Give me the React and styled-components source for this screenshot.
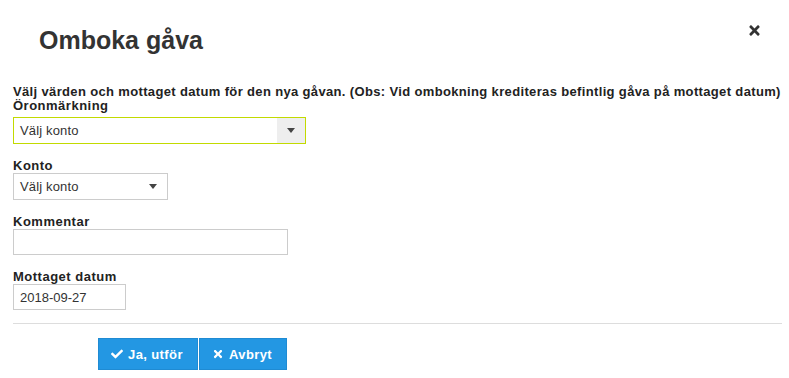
import React from "react"
import styled, { createGlobalStyle } from "styled-components"
import { FaCheck, FaTimes } from "react-icons/fa"

const GlobalStyle = createGlobalStyle`
  html, body {
    margin: 0;
    padding: 0;
    background: #fff;
  }
  body {
    font-family: "Liberation Sans", Arial, sans-serif;
    color: #333;
  }
  * {
    box-sizing: border-box;
  }
`

const Dialog = styled.div`
  width: 789px;
  height: 378px;
  background: #fff;
  overflow: hidden;
`

const Header = styled.header`
  display: flex;
  justify-content: space-between;
  align-items: flex-start;
  padding: 26px 27px 0 39px;
`

const Title = styled.h2`
  margin: 0;
  font-size: 25px;
  line-height: 29px;
  font-weight: bold;
  color: #333;
`

const CloseBtn = styled.button`
  display: flex;
  align-items: center;
  justify-content: center;
  margin-top: -3px;
  padding: 0;
  border: 0;
  background: none;
  color: #333;
  font-size: 15px;
  cursor: pointer;
`

const Body = styled.div`
  padding: 30px 7px 0 13px;
`

const Intro = styled.p`
  margin: 0;
  font-size: 13px;
  line-height: 14px;
  font-weight: bold;
  letter-spacing: 0.35px;
  color: #222;
  white-space: nowrap;
`

const Field = styled.div`
  display: flex;
  flex-direction: column;
  align-items: flex-start;
  margin-bottom: 15px;
`

const Label = styled.label`
  display: block;
  font-size: 13px;
  line-height: 14px;
  font-weight: bold;
  letter-spacing: 0.5px;
  color: #222;
  white-space: nowrap;
  margin-bottom: ${p => (p.$gap ? "4px" : "0")};
`

const SelectBox = styled.div`
  display: flex;
  align-items: stretch;
  width: ${p => p.$w}px;
  height: 27px;
  border: 1px solid ${p => (p.$active ? "#c2da00" : "#ccc")};
  background: #fff;
  font-size: 13px;
  color: #333;
`

const SelectText = styled.span`
  flex: 1;
  display: flex;
  align-items: center;
  padding-left: 6px;
  letter-spacing: 0.15px;
`

const Arrow = styled.span`
  display: flex;
  align-items: center;
  justify-content: center;
  width: 28px;
  background: ${p => (p.$filled ? "#eee" : "transparent")};

  &::after {
    content: "";
    border-left: 4.5px solid transparent;
    border-right: 4.5px solid transparent;
    border-top: 5px solid #444;
  }
`

const TextInput = styled.input`
  width: ${p => p.$w}px;
  height: 26px;
  padding: 0 6px;
  border: 1px solid #ccc;
  font-family: inherit;
  font-size: 13px;
  color: #333;
  outline: none;
`

const Divider = styled.hr`
  margin: -2px 0 14px;
  border: 0;
  border-top: 1px solid #ddd;
`

const Actions = styled.div`
  display: flex;
  gap: 1px;
  padding-left: 85px;
`

const ActionBtn = styled.button`
  display: flex;
  align-items: center;
  gap: 5px;
  height: 32px;
  width: ${p => p.$w}px;
  padding: 0 0 0 12px;
  border: 1px solid #1f8bd3;
  background: #2397e3;
  color: #fff;
  font-family: inherit;
  font-size: 13px;
  font-weight: bold;
  letter-spacing: 0.4px;
  cursor: pointer;

  svg {
    font-size: 12px;
  }
`

export default function App() {
  return (
    <>
      <GlobalStyle />
      <Dialog>
        <Header>
          <Title>Omboka gåva</Title>
          <CloseBtn aria-label="Stäng">
            <FaTimes />
          </CloseBtn>
        </Header>
        <Body>
          <Intro>
            Välj värden och mottaget datum för den nya gåvan. (Obs: Vid ombokning krediteras befintlig gåva på mottaget datum)
          </Intro>
          <Field>
            <Label $gap>Öronmärkning</Label>
            <SelectBox $w={293} $active>
              <SelectText>Välj konto</SelectText>
              <Arrow $filled />
            </SelectBox>
          </Field>
          <Field>
            <Label>Konto</Label>
            <SelectBox $w={155}>
              <SelectText>Välj konto</SelectText>
              <Arrow />
            </SelectBox>
          </Field>
          <Field>
            <Label htmlFor="kommentar">Kommentar</Label>
            <TextInput id="kommentar" $w={275} />
          </Field>
          <Field>
            <Label htmlFor="datum">Mottaget datum</Label>
            <TextInput id="datum" $w={113} defaultValue="2018-09-27" />
          </Field>
          <Divider />
          <Actions>
            <ActionBtn $w={100}>
              <FaCheck /> Ja, utför
            </ActionBtn>
            <ActionBtn $w={88}>
              <FaTimes /> Avbryt
            </ActionBtn>
          </Actions>
        </Body>
      </Dialog>
    </>
  )
}
